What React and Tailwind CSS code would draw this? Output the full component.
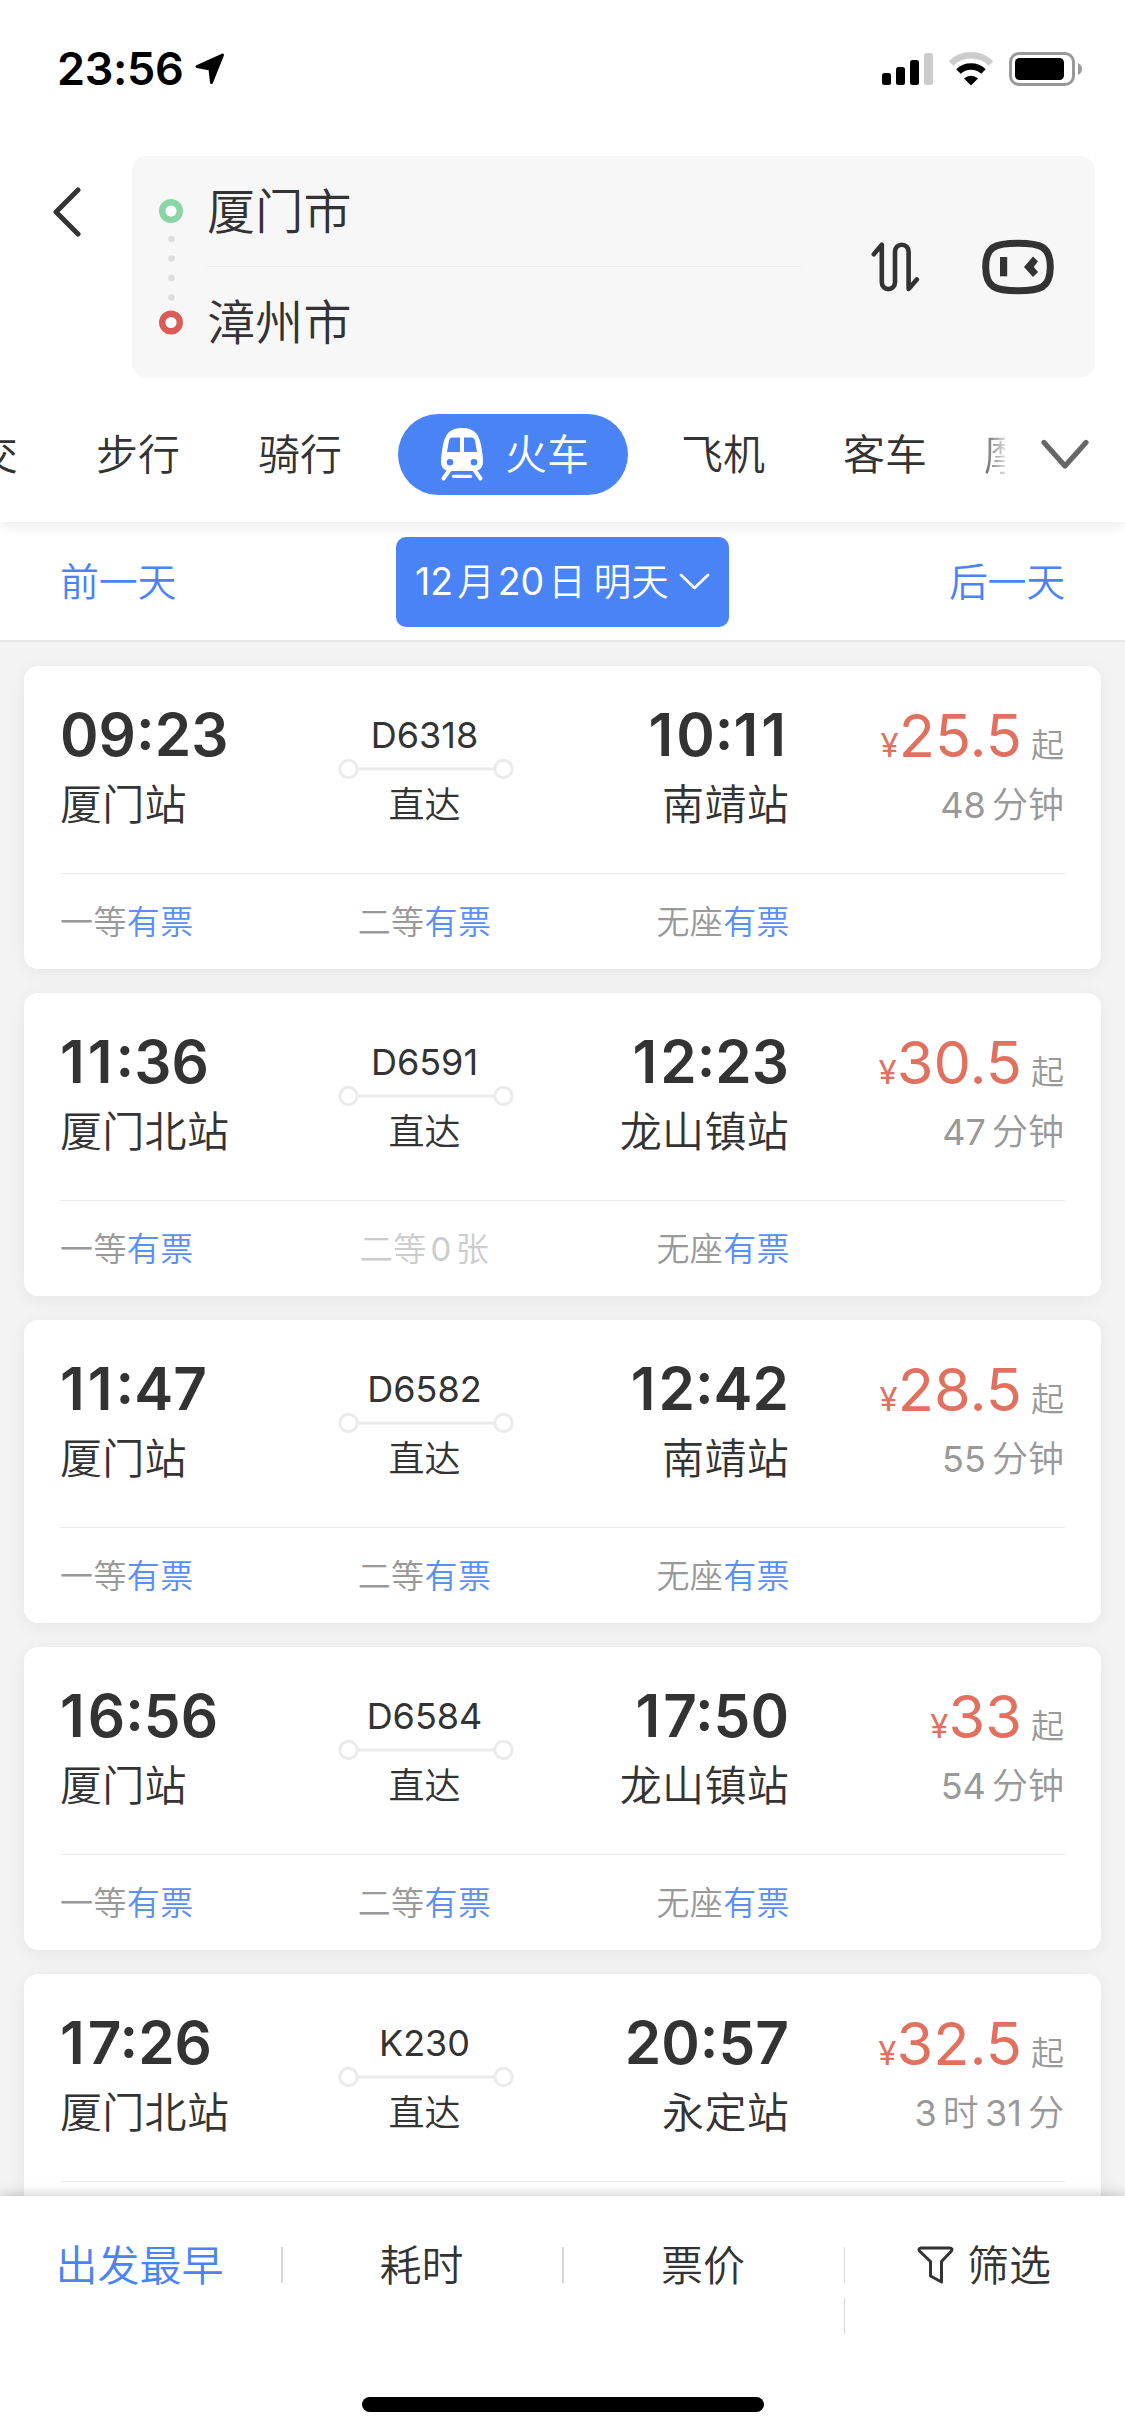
import React from "react";

const seats = [
  { name: "一等", className: "text-left" },
  { name: "二等", className: "text-center" },
  { name: "无座", className: "text-right -mr-[1px]" },
];

const trains = [
  { dep: "09:23", from: "厦门站", no: "D6318", arr: "10:11", to: "南靖站", price: "25.5", time: "48 分钟", seats },
  { dep: "11:36", from: "厦门北站", no: "D6591", arr: "12:23", to: "龙山镇站", price: "30.5", time: "47 分钟", seats, soldOut: "二等" },
  { dep: "11:47", from: "厦门站", no: "D6582", arr: "12:42", to: "南靖站", price: "28.5", time: "55 分钟", seats },
  { dep: "16:56", from: "厦门站", no: "D6584", arr: "17:50", to: "龙山镇站", price: "33", time: "54 分钟", seats },
  { dep: "17:26", from: "厦门北站", no: "K230", arr: "20:57", to: "永定站", price: "32.5", time: "3 时 31 分", seats: [] },
];

const StatusBar = () => (
  <div className="h-[156px] flex items-start justify-between pl-[57px] pr-[42px] pt-[52px] text-black">
    <div className="flex items-start">
      <span className="text-[45px] leading-[34px] font-semibold w-[138px] tracking-[-0.3px]">23:56</span>
      <svg width="30" height="32" viewBox="0 0 30 32" className="mt-[1px]">
        <path d="M27.5 2 L2 13.5 L15 16 L16.5 29.5 Z" fill="#000" stroke="#000" strokeWidth="3" strokeLinejoin="round" />
      </svg>
    </div>
    <div className="flex items-start">
      <svg width="51" height="34" viewBox="0 0 51 34" className="mr-[15px]">
        <rect x="0" y="21" width="9" height="12" rx="2.5" />
        <rect x="14" y="15" width="9" height="18" rx="2.5" />
        <rect x="28" y="8" width="9" height="25" rx="2.5" />
        <rect x="42" y="1" width="9" height="32" rx="2.5" fill="#ccc" />
      </svg>
      <svg width="46" height="34" viewBox="0 0 46 34" fill="none" className="mr-[15px]">
        <path d="M3 11.5 A28.5 28.5 0 0 1 43 11.5" stroke="#ccc" strokeWidth="6.5" />
        <path d="M10.5 19.5 A18 18 0 0 1 35.5 19.5" stroke="#000" strokeWidth="6.5" />
        <path d="M16 26.5 A10.5 10.5 0 0 1 30 26.5 L23 33.5 Z" fill="#000" />
      </svg>
      <svg width="74" height="34" viewBox="0 0 74 34">
        <rect x="1.5" y="1.5" width="63" height="31" rx="8.5" fill="none" stroke="#999" strokeWidth="3" />
        <rect x="6" y="6" width="49" height="22" rx="4.5" />
        <path d="M69 11 Q73 13 73 17 Q73 21 69 23 Z" fill="#999" />
      </svg>
    </div>
  </div>
);

const SearchHeader = () => (
  <div className="relative z-20 flex h-[222px] bg-white">
    <div className="w-[132px] pl-[52px] pt-[31px]">
      <svg width="30" height="50" viewBox="0 0 30 50" fill="none" stroke="#333" strokeWidth="5" strokeLinecap="round" strokeLinejoin="round">
        <path d="M26 3 L4 25 L26 47" />
      </svg>
    </div>
    <div className="w-[963px] rounded-[15px] bg-[#f7f7f7] flex items-center">
      <svg width="24" height="136" viewBox="0 0 24 136" className="ml-[27px]" fill="none">
        <circle cx="12" cy="12" r="8.8" stroke="#8ad4a5" strokeWidth="6.4" fill="#fff" />
        <circle cx="12.5" cy="40" r="3.2" fill="#ddd" />
        <circle cx="12.5" cy="59.5" r="3.2" fill="#ddd" />
        <circle cx="12.5" cy="79" r="3.2" fill="#ddd" />
        <circle cx="12.5" cy="98.5" r="3.2" fill="#ddd" />
        <circle cx="12" cy="123.5" r="8.8" stroke="#db5c57" strokeWidth="6.4" fill="#fff" />
      </svg>
      <div className="ml-[24px] w-[594px] text-[48px] tracking-[0.3px] text-[#333]">
        <div className="h-[111px] border-b border-[#e9e9e9] leading-[112px]">厦门市</div>
        <div className="h-[111px] leading-[112px]">漳州市</div>
      </div>
      <svg width="49" height="50" viewBox="0 0 49 50" className="ml-[70px]" fill="none" stroke="#333" strokeWidth="4.6" strokeLinecap="round" strokeLinejoin="round">
        <path d="M2.8 12.3 L10.8 2.8 V40.5 a6.6 6.6 0 0 0 13.2 0 V9.5 a6.8 6.8 0 0 1 13.6 0 V47 L45.8 37.5" />
      </svg>
      <svg width="72" height="56" viewBox="0 0 72 56" className="ml-[62px]">
        <path d="M36 4.2 C58 4.2 68.3 7 68.3 28 C68.3 49 58 51.8 36 51.8 C14 51.8 3.7 49 3.7 28 C3.7 7 14 4.2 36 4.2 Z" fill="none" stroke="#333" strokeWidth="7" />
        <rect x="18" y="18" width="7.2" height="19.3" fill="#333" />
        <path d="M42 28 L51 17.5 L56 22.3 L51.8 28 L56 33 L51 38 Z" fill="#333" />
      </svg>
    </div>
  </div>
);

const TrainIcon = () => (
  <svg width="42" height="53" viewBox="0 0 42 53" fill="none">
    <path
      fillRule="evenodd"
      fill="#fff"
      d="M21 0 C34 0 38 7 40 17 C41 22 42 28 42 34 C42 40 38 43 33 43 L9 43 C4 43 0 40 0 34 C0 28 1 22 2 17 C4 7 8 0 21 0 Z M19 9.5 H12 C9.5 9.5 8.5 10.5 8 12.5 L6 24 H19 Z M23 9.5 V24 H36 L34 12.5 C33.5 10.5 32.5 9.5 30 9.5 Z M9 31 a3.3 3.3 0 1 0 0 6.6 a3.3 3.3 0 0 0 0 -6.6 Z M33 31 a3.3 3.3 0 1 0 0 6.6 a3.3 3.3 0 0 0 0 -6.6 Z"
    />
    <path d="M8.5 42 L2.5 50.5 M33.5 42 L39.5 50.5" stroke="#fff" strokeWidth="4" strokeLinecap="round" />
    <path d="M12.5 48.3 H29.5" stroke="#fff" strokeWidth="3.2" strokeLinecap="round" />
  </svg>
);

const Tabs = () => (
  <div className="relative z-10 h-[144px] bg-white pt-[36px] shadow-[0_3px_14px_rgba(0,0,0,0.09)]">
    <div className="flex h-[81px] items-center overflow-hidden whitespace-nowrap text-[42px] leading-[81px] text-[#333]">
      <span className="-ml-[24px]">交</span>
      <span className="ml-[78px]">步行</span>
      <span className="ml-[78px]">骑行</span>
      <div className="ml-[56px] flex h-[81px] w-[230px] items-center rounded-full bg-[#4a83f6] pl-[43px] text-white">
        <TrainIcon />
        <span className="ml-[22px]">火车</span>
      </div>
      <span className="ml-[53px]">飞机</span>
      <span className="ml-[78px]">客车</span>
      <span className="ml-[57px] w-[21px] overflow-hidden bg-linear-to-r from-[#666] to-[#ddd] bg-clip-text text-transparent">摩</span>
      <svg width="48" height="31" viewBox="0 0 48 31" className="ml-[36px]" fill="none" stroke="#666" strokeWidth="5.2" strokeLinecap="round" strokeLinejoin="round">
        <path d="M3 3.5 L24 27 L45 3.5" />
      </svg>
    </div>
  </div>
);

const DateBar = () => (
  <div className="flex h-[120px] items-center justify-between border-b-2 border-[#e8e8e8] bg-white px-[60px] text-[39px] text-[#4a83f6]">
    <span className="pt-[2px] tracking-[-0.3px]">前一天</span>
    <div className="mt-[2px] flex h-[90px] w-[333px] items-center rounded-[10px] bg-[#4a83f6] pl-[19px] text-white">
      <span className="w-[264px] whitespace-nowrap text-[37.5px]">
        <span className="font-normal">12</span>
        <span className="ml-[4px] mr-[3px]">月</span>
        <span className="font-normal">20</span>
        <span className="ml-[4px] mr-[8px]">日</span>明天
      </span>
      <svg width="31" height="18" viewBox="0 0 31 18" fill="none" stroke="#fff" strokeWidth="2.8" strokeLinecap="round" strokeLinejoin="round">
        <path d="M2 2 L15.5 15 L29 2" />
      </svg>
    </div>
    <span className="pt-[2px] tracking-[-0.3px]">后一天</span>
  </div>
);

// the digit 1 gets a little extra room so narrow times keep their rhythm
const Time = ({ value }) => (
  <div className="text-[58.5px] leading-[56px] font-semibold">
    {value.split("").map((c, i) => (
      <span key={i} className={c === "1" ? "tracking-[3px]" : ""}>{c}</span>
    ))}
  </div>
);

const Duration = ({ value }) => (
  <div className="mt-[14px] text-[36px] leading-[56px] [word-spacing:-4px]">
    {value.split(/(\d+)/).map((part, i) => (
      <span key={i} className={/\d/.test(part) ? "font-normal" : ""}>{part}</span>
    ))}
  </div>
);

const TrainCard = ({ train }) => (
  <div className="h-[303px] shrink-0 rounded-[14px] bg-white px-[36px] text-[#333] shadow-[0_3px_18px_rgba(0,0,0,0.06)]">
    <div className="grid h-[207px] grid-cols-[243px_243px_243px_1fr]">
      <div className="pt-[41px]">
        <Time value={train.dep} />
        <div className="mt-[14px] text-[42px] leading-[56px] tracking-[0.3px]">{train.from}</div>
      </div>
      <div className="flex flex-col items-center pt-[51px] text-[36px]">
        <div className="leading-[36px] font-normal">{train.no}</div>
        <svg width="176" height="22" viewBox="0 0 176 22" fill="none" stroke="#ebebeb" strokeWidth="3" className="mt-[5px] ml-[2px]">
          <circle cx="10.5" cy="11" r="8.7" />
          <path d="M20 11 H156" />
          <circle cx="165.5" cy="11" r="8.7" />
        </svg>
        <div className="mt-[4px] leading-[42px]">直达</div>
      </div>
      <div className="pt-[41px] text-right">
        <Time value={train.arr} />
        <div className="mt-[14px] text-[42px] leading-[56px] tracking-[0.3px]">{train.to}</div>
      </div>
      <div className="pt-[41px] pr-[1px] text-right text-[#999]">
        <div className="flex h-[56px] items-baseline justify-end leading-[56px]">
          <span className="text-[33px] font-normal text-[#e2705f]">¥</span>
          <span className="text-[59.5px] font-normal text-[#e2705f]">{train.price}</span>
          <span className="ml-[9px] text-[33px]">起</span>
        </div>
        <Duration value={train.time} />
      </div>
    </div>
    <div className="grid h-[96px] grid-cols-[243px_243px_243px_1fr] border-t border-[#ebebeb] text-[33px] leading-[97px] tracking-[0.4px] text-[#999]">
      {train.seats.map((seat) => (
        <div key={seat.name} className={seat.className}>
          {seat.name === train.soldOut ? (
            <span className="text-[#ccc]">{seat.name}<span className="mx-[4px] font-normal">0</span>张</span>
          ) : (
            <span>{seat.name}<span className="text-[#5a8ff7]">有票</span></span>
          )}
        </div>
      ))}
    </div>
  </div>
);

const BottomBar = () => (
  <div className="relative z-10 h-[240px] shrink-0 bg-white shadow-[0_-2px_12px_rgba(0,0,0,0.2)]">
    <div className="flex h-[138px] text-[42px] leading-[139px] text-[#333]">
      <div className="w-[281px] pr-[2px] text-center text-[#4a83f6]">出发最早</div>
      <div className="mt-[51px] h-[36px] w-[2px] bg-[#d6d6d6]" />
      <div className="w-[279px] pr-[2px] text-center">耗时</div>
      <div className="mt-[51px] h-[36px] w-[2px] bg-[#d6d6d6]" />
      <div className="w-[280px] pr-[2px] text-center">票价</div>
      <div className="mt-[51px] w-px">
        <div className="h-[36px] bg-[#d6d6d6]" />
        <div className="mt-[15px] h-[36px] bg-[#d6d6d6]" />
      </div>
      <div className="flex flex-1 pl-[72px]">
        <svg width="37" height="38" viewBox="0 0 37 38" fill="none" stroke="#333" strokeWidth="3" strokeLinejoin="round" className="mt-[50px]">
          <path d="M4 2 H33 Q36 2.5 34.5 5 L24.5 15.5 V36 L13.5 30 V15.5 L2.5 5 Q1 2.5 4 2 Z" />
        </svg>
        <span className="ml-[13px]">筛选</span>
      </div>
    </div>
    <div className="mx-auto mt-[63px] h-[15px] w-[402px] rounded-full bg-black" />
  </div>
);

export default function App() {
  return (
    <div className="flex h-[2436px] w-[1125px] flex-col overflow-hidden bg-white font-['Inter','Noto_Sans_CJK_SC',sans-serif] font-[350]">
      <StatusBar />
      <SearchHeader />
      <Tabs />
      <DateBar />
      <div className="flex min-h-0 flex-1 flex-col gap-6 overflow-hidden bg-[#f3f3f3] px-6 pt-6">
        {trains.map((train) => (
          <TrainCard key={train.no} train={train} />
        ))}
      </div>
      <BottomBar />
    </div>
  );
}
